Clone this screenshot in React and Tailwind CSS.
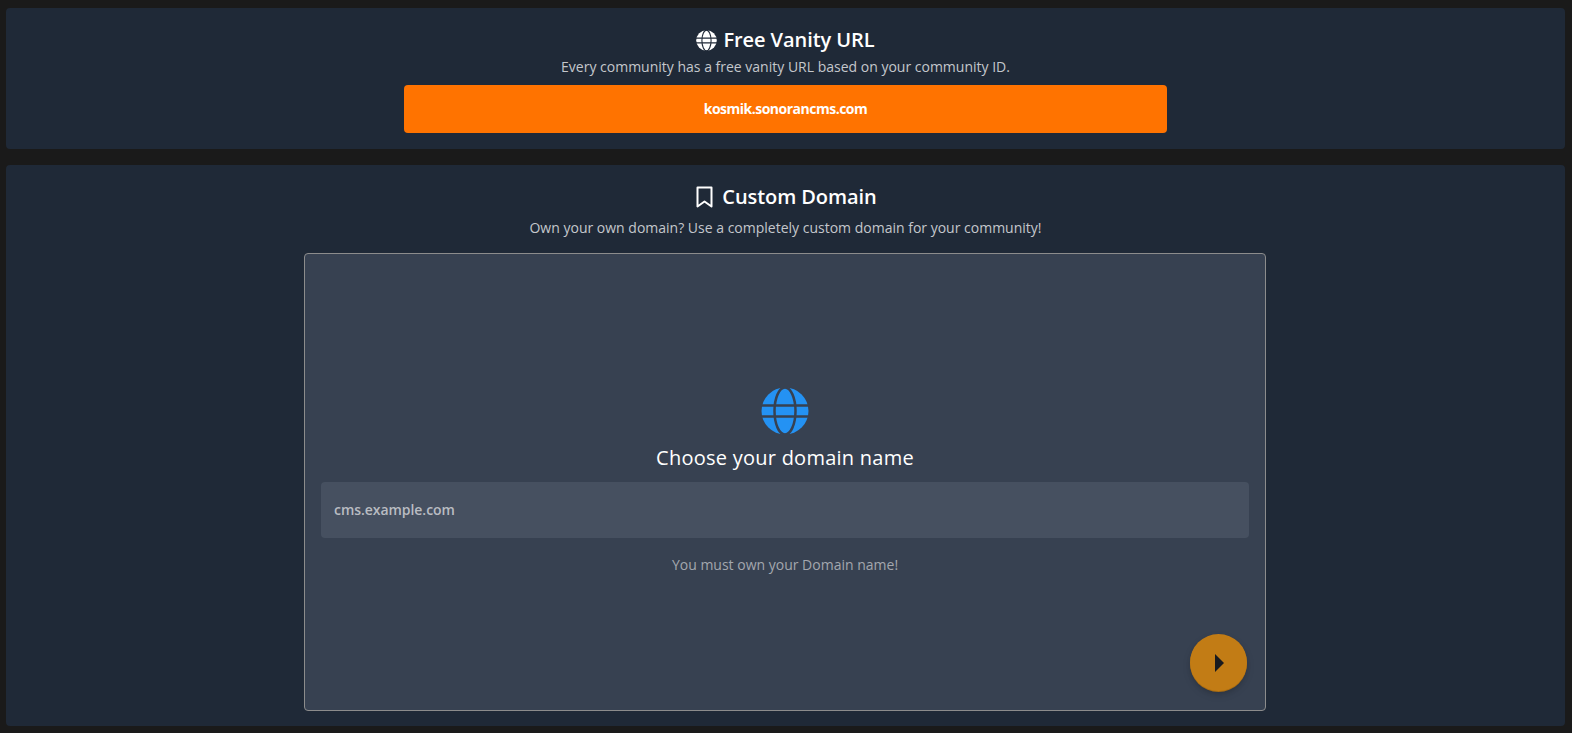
import React from "react"

// filled globe, the grid lines are drawn in the colour of the panel behind it
const Globe = ({ className, fill, line }) => (
  <svg viewBox="0 0 48 48" className={className}>
    <circle cx="24" cy="24" r="23.5" fill={fill} />
    <ellipse cx="24" cy="24" rx="10.5" ry="23.5" fill="none" stroke={line} strokeWidth="2.5" />
    <path d="M0 18.5H48M0 29.5H48" stroke={line} strokeWidth="2.5" />
  </svg>
)

const App = () => {
  return (
    <div className="min-h-[733px] bg-[#1a1a1a] pl-[6px] pr-[7px] pt-2 font-['Open_Sans',sans-serif] flex flex-col gap-4">

      {/* Vanity URL */}
      <div className="h-[141px] rounded bg-[#1f2937] flex flex-col items-center pt-[18px]">
        <div className="flex items-center gap-[6px] h-7">
          <Globe className="w-[21px] h-[21px]" fill="#ffffff" line="#1f2937" />
          <h2 className="text-[20px] font-semibold text-white tracking-[-0.07px]">Free Vanity URL</h2>
        </div>
        <p className="text-[14px] leading-5 text-[#c4c7cc] mt-[3px]">Every community has a free vanity URL based on your community ID.</p>
        <div className="w-[763px] h-12 mt-[8px] rounded bg-[#ff7300] flex items-center justify-center text-sm font-bold text-white tracking-[-0.5px]">
          kosmik.sonorancms.com
        </div>
      </div>

      {/* Custom domain */}
      <div className="h-[561px] rounded bg-[#1f2937] flex flex-col items-center pt-[18px]">
        <div className="flex items-center gap-[9px] h-7 ml-[2px]">
          <svg viewBox="0 0 17 22" className="w-[17px] h-[22px]">
            <path d="M1.5 1.5H15.5V20.5L8.5 15.5L1.5 20.5Z" fill="none" stroke="#ffffff" strokeWidth="2" strokeLinejoin="round" />
          </svg>
          <h2 className="text-[20px] font-semibold text-white tracking-[-0.08px]">Custom Domain</h2>
        </div>
        <p className="text-[14px] leading-5 text-[#c4c7cc] mt-[7px]">Own your own domain? Use a completely custom domain for your community!</p>

        <div className="relative w-[962px] h-[458px] mt-[15px] mr-[1px] rounded border border-[#8c8c8c] bg-[#374151] flex flex-col items-center pt-[133px] px-4">
          <Globe className="w-12 h-12" fill="#2492f3" line="#374151" />
          <h3 className="text-[20px] leading-7 text-white tracking-[0.25px] mt-[9px]">Choose your domain name</h3>
          <div className="w-full h-14 mt-[10px] rounded bg-[#465060] flex items-center px-[13px] text-sm font-semibold tracking-[-0.05px] text-[#b9bcc2]">
            cms.example.com
          </div>
          <p className="text-sm leading-5 text-[#a3a7ae] mt-[17px]">You must own your Domain name!</p>

          {/* next button */}
          <button className="absolute right-[18px] bottom-[19px] w-[57px] h-[57px] rounded-full bg-[#c27c15] shadow-[0_1px_0_0_#a96c12,0_3px_5px_-1px_rgba(0,0,0,0.15),0_4px_8px_0_rgba(0,0,0,0.1)] flex items-center justify-center">
            <svg viewBox="0 0 9 18" className="w-[9px] h-[18px] ml-[2px]">
              <path d="M0 0L9 9L0 18Z" fill="#181a1f" />
            </svg>
          </button>
        </div>
      </div>

    </div>
  )
}

export default App
